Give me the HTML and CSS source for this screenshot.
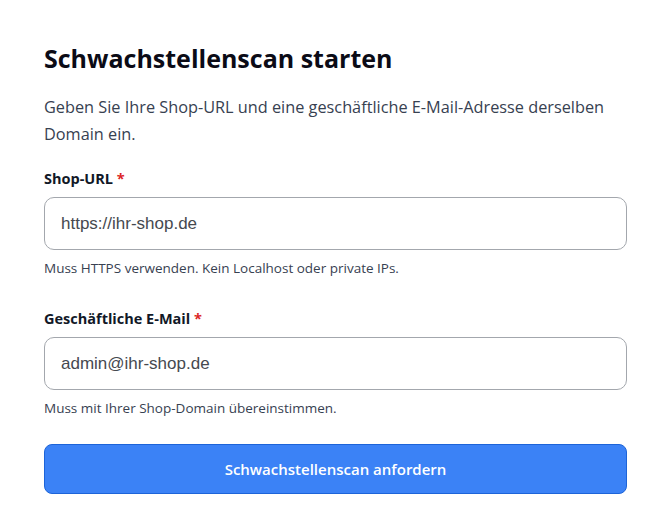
FILE: index.html
```html
<!DOCTYPE html>
<html lang="de">
<head>
<meta charset="utf-8">
<link rel="stylesheet" href="styles.css">
</head>
<body>
<main class="card">
  <h1 class="title">Schwachstellenscan starten</h1>
  <p class="intro">Geben Sie Ihre Shop-URL und eine geschäftliche E-Mail-Adresse derselben Domain ein.</p>
  <form class="form">
    <div class="field">
      <label class="label" for="url">Shop-URL <span class="req">*</span></label>
      <input class="input" id="url" type="text" placeholder="https://ihr-shop.de">
      <p class="hint">Muss HTTPS verwenden. Kein Localhost oder private IPs.</p>
    </div>
    <div class="field">
      <label class="label" for="mail">Geschäftliche E-Mail <span class="req">*</span></label>
      <input class="input" id="mail" type="text" placeholder="admin@ihr-shop.de">
      <p class="hint">Muss mit Ihrer Shop-Domain übereinstimmen.</p>
    </div>
    <button class="submit" type="button">Schwachstellenscan anfordern</button>
  </form>
</main>
</body>
</html>
```
FILE: styles.css
```css
html, body {
  margin: 0;
  padding: 0;
  background: #ffffff;
}
body {
  font-family: "Open Sans", "Noto Sans", sans-serif;
  color: #111827;
}
.card {
  padding: 40px 38px 0 44px;
}
.title {
  margin: 0;
  font-size: 25px;
  line-height: 36px;
  font-weight: 700;
  color: #0b0b16;
}
.intro {
  margin: 18px 0 0;
  font-size: 16.3px;
  line-height: 26.7px;
  color: #374151;
}
.form {
  display: flex;
  flex-direction: column;
  margin-top: 22px;
}
.field {
  display: flex;
  flex-direction: column;
}
.field + .field {
  margin-top: 32px;
}
.label {
  font-size: 14.5px;
  line-height: 20px;
  font-weight: 700;
  color: #111827;
  margin-bottom: 8px;
}
.req {
  color: #dc2626;
}
.input {
  box-sizing: border-box;
  height: 53px;
  padding: 0 16px;
  border: 1px solid #a3a7ad;
  border-radius: 10px;
  font-family: "Liberation Sans", Arial, sans-serif;
  font-size: 17px;
  color: #1f2937;
  outline: none;
}
.input::placeholder {
  color: #45494f;
  opacity: 1;
}
.hint {
  margin: 9px 0 0;
  font-size: 13.5px;
  line-height: 18px;
  color: #374151;
}
.submit {
  margin-top: 27px;
  height: 50px;
  border: 1px solid #1d64d8;
  border-radius: 8px;
  background: #3b82f6;
  color: #ffffff;
  font-family: "Open Sans", "Noto Sans", sans-serif;
  font-size: 15px;
  font-weight: 600;
  cursor: pointer;
}
```
